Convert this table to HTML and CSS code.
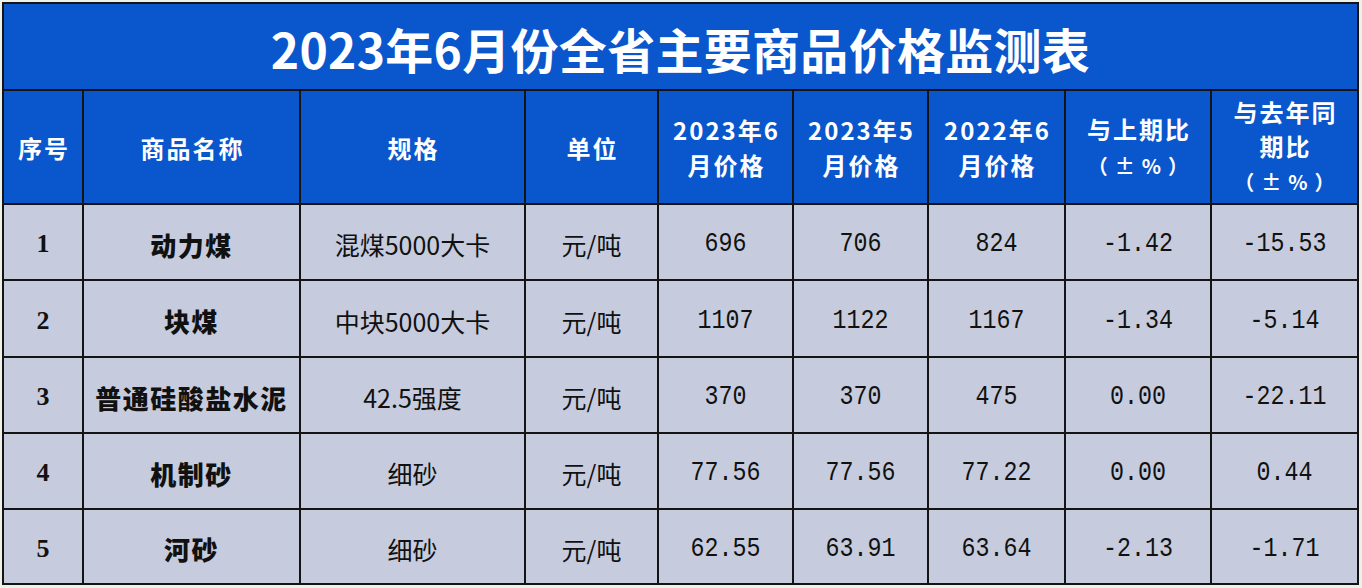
FILE: index.html
```html
<!DOCTYPE html>
<html lang="zh-CN">
<head>
<meta charset="utf-8">
<title>2023年6月份全省主要商品价格监测表</title>
<link rel="stylesheet" href="styles.css">
</head>
<body>
<div class="sheet">
  <div class="title">2023年6月份全省主要商品价格监测表</div>

  <div class="hd"><div class="txt">序号</div></div>
  <div class="hd"><div class="txt">商品名称</div></div>
  <div class="hd"><div class="txt">规格</div></div>
  <div class="hd"><div class="txt">单位</div></div>
  <div class="hd"><div class="txt">2023年6<br>月价格</div></div>
  <div class="hd"><div class="txt">2023年5<br>月价格</div></div>
  <div class="hd"><div class="txt">2022年6<br>月价格</div></div>
  <div class="hd"><div class="txt">与上期比<br><span class="pct">（±%）</span></div></div>
  <div class="hd"><div class="txt tight">与去年同<br>期比<br><span class="pct">（±%）</span></div></div>

  <div class="c idx">1</div>
  <div class="c name">动力煤</div>
  <div class="c spec">混煤5000大卡</div>
  <div class="c unit">元/吨</div>
  <div class="c num"><span>696</span></div>
  <div class="c num"><span>706</span></div>
  <div class="c num"><span>824</span></div>
  <div class="c num"><span>-1.42</span></div>
  <div class="c num"><span>-15.53</span></div>

  <div class="c idx">2</div>
  <div class="c name">块煤</div>
  <div class="c spec">中块5000大卡</div>
  <div class="c unit">元/吨</div>
  <div class="c num"><span>1107</span></div>
  <div class="c num"><span>1122</span></div>
  <div class="c num"><span>1167</span></div>
  <div class="c num"><span>-1.34</span></div>
  <div class="c num"><span>-5.14</span></div>

  <div class="c idx">3</div>
  <div class="c name">普通硅酸盐水泥</div>
  <div class="c spec">42.5强度</div>
  <div class="c unit">元/吨</div>
  <div class="c num"><span>370</span></div>
  <div class="c num"><span>370</span></div>
  <div class="c num"><span>475</span></div>
  <div class="c num"><span>0.00</span></div>
  <div class="c num"><span>-22.11</span></div>

  <div class="c idx">4</div>
  <div class="c name">机制砂</div>
  <div class="c spec">细砂</div>
  <div class="c unit">元/吨</div>
  <div class="c num"><span>77.56</span></div>
  <div class="c num"><span>77.56</span></div>
  <div class="c num"><span>77.22</span></div>
  <div class="c num"><span>0.00</span></div>
  <div class="c num"><span>0.44</span></div>

  <div class="c idx">5</div>
  <div class="c name">河砂</div>
  <div class="c spec">细砂</div>
  <div class="c unit">元/吨</div>
  <div class="c num"><span>62.55</span></div>
  <div class="c num"><span>63.91</span></div>
  <div class="c num"><span>63.64</span></div>
  <div class="c num"><span>-2.13</span></div>
  <div class="c num"><span>-1.71</span></div>
</div>
</body>
</html>
```

FILE: styles.css
```css
html, body {
  margin: 0;
  padding: 0;
}

body {
  background: #eef1ea;
  width: 1362px;
  height: 588px;
  overflow: hidden;
  font-family: "Noto Sans CJK SC", "Noto Sans", sans-serif;
}

.sheet {
  margin: 2px 0 0 2px;
  width: 1357px;
  box-sizing: border-box;
  display: grid;
  grid-template-columns: 78px 215px 223px 131px 133px 133px 135px 144px 145px;
  grid-template-rows: 85px 112px 74px 75px 74px 74px 73px;
  gap: 2px;
  padding: 2px;
  background: #141414;
}

.title {
  grid-column: 1 / -1;
  background: #0a56cc;
  color: #ffffff;
  font-size: 48px;
  font-weight: 600;
  display: flex;
  align-items: center;
  justify-content: center;
  padding-top: 2px;
  letter-spacing: 0.3px;
}

.hd {
  background: #0a56cc;
  color: #ffffff;
  font-size: 24px;
  font-weight: 700;
  display: flex;
  align-items: center;
  justify-content: center;
  text-align: center;
}

.txt {
  line-height: 35px;
  letter-spacing: 2px;
  padding-left: 2px;
}

.txt.tight {
  line-height: 34px;
}

.pct {
  font-size: 20px;
  letter-spacing: 7px;
  padding-left: 5px;
}

.c {
  background: #c6ccdd;
  color: #111111;
  display: flex;
  align-items: center;
  justify-content: center;
  padding-top: 4px;
  box-sizing: border-box;
}

.idx {
  font-family: "Liberation Serif", serif;
  font-weight: 700;
  font-size: 26px;
}

.name {
  font-size: 26px;
  font-weight: 900;
  letter-spacing: 1.5px;
}

.spec,
.unit {
  font-size: 25px;
  font-weight: 400;
}

.num {
  font-family: "Liberation Mono", monospace;
  font-size: 23.3px;
}

.num span {
  display: inline-block;
  transform: scaleY(1.2);
}
```
